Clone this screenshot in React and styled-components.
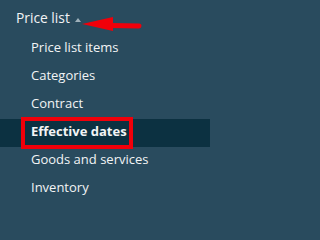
import React from "react";
import styled, { createGlobalStyle } from "styled-components";

const Global = createGlobalStyle`
  html, body { margin: 0; padding: 0; background: #294b5e; }
  body { font-family: "Open Sans", "Noto Sans", sans-serif; }
`;

const Panel = styled.nav`
  width: 210px;
  height: 208px;
  background: #294b5e;
  overflow: hidden;
  display: flex;
  flex-direction: column;
  padding-top: 6px;
  box-sizing: border-box;
`;

const Header = styled.div`
  height: 29px;
  display: flex;
  align-items: flex-start;
  padding-left: 16px;
  position: relative;
  color: #f2f4f5;
  font-size: 13.8px;
  line-height: 24px;
`;

const Caret = styled.span`
  width: 0;
  height: 0;
  border-left: 3.5px solid transparent;
  border-right: 3.5px solid transparent;
  border-bottom: 4px solid #9fb1bb;
  margin-left: 5px;
  margin-top: 12px;
`;

const Arrow = styled.svg`
  position: absolute;
  left: 80px;
  top: 4px;
`;

const List = styled.ul`
  list-style: none;
  margin: 0;
  padding: 0;
  display: flex;
  flex-direction: column;
`;

const Item = styled.li`
  height: 28px;
  box-sizing: border-box;
  padding-left: 31px;
  padding-bottom: 4px;
  font-size: 13px;
  line-height: 24px;
  color: #f2f4f5;
  font-weight: ${(p) => (p.$active ? 700 : 400)};
  background: ${(p) => (p.$active ? "#0c3141" : "transparent")};
  position: relative;
  white-space: nowrap;
`;

const Highlight = styled.span`
  position: absolute;
  left: 21px;
  top: -2px;
  width: 112px;
  height: 32px;
  box-sizing: border-box;
  border: 4px solid #f0000a;
`;

const items = [
  "Price list items",
  "Categories",
  "Contract",
  "Effective dates",
  "Goods and services",
  "Inventory",
];

export default function App() {
  return (
    <>
      <Global />
      <Panel>
        <Header>
          Price list
          <Caret />
          <Arrow width="64" height="24" viewBox="0 0 64 24">
            <path d="M2 14 L33 7 L33 21 Z" fill="#f0000a" />
            <path d="M31 15.5 L59 16" stroke="#f0000a" strokeWidth="5" strokeLinecap="round" />
          </Arrow>
        </Header>
        <List>
          {items.map((t) => (
            <Item key={t} $active={t === "Effective dates"}>
              {t}
              {t === "Effective dates" && <Highlight />}
            </Item>
          ))}
        </List>
      </Panel>
    </>
  );
}
